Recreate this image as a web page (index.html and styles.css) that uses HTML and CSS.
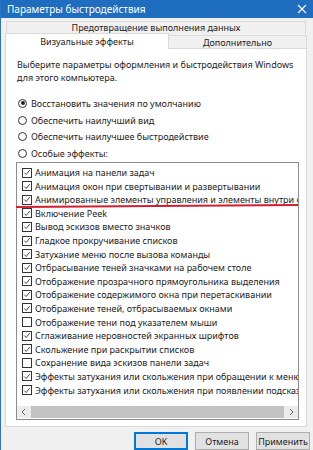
FILE: index.html
```html
<html lang="ru">
<head>
    <meta charset="UTF-8">
    <meta name="viewport" content="width=device-width, initial-scale=1.0">
    <title>Параметры быстродействия</title>
    <link rel="stylesheet" href="styles.css">
</head>
<body>
<div class="window">
    <div class="titlebar">
        <span class="title">Параметры быстродействия</span>
        <svg class="close" width="10" height="10" viewBox="0 0 10 10"><path d="M1 1 L9 9 M9 1 L1 9" stroke="#fff" stroke-width="1.1"/></svg>
    </div>

    <div class="content">
        <div class="tabs-top">
            <div class="tab tab-dep">Предотвращение выполнения данных</div>
        </div>
        <div class="tabs">
            <div class="tab tab-active">Визуальные эффекты</div>
            <div class="tab tab-more">Дополнительно</div>
        </div>

        <div class="panel">
            <p class="intro">Выберите параметры оформления и быстродействия Windows<br>для этого компьютера.</p>

            <div class="radios">
                <div class="radio-row"><span class="radio checked"></span>Восстановить значения по умолчанию</div>
                <div class="radio-row"><span class="radio"></span>Обеспечить наилучший вид</div>
                <div class="radio-row"><span class="radio"></span>Обеспечить наилучшее быстродействие</div>
                <div class="radio-row"><span class="radio"></span>Особые эффекты:</div>
            </div>

            <div class="listbox">
                <div class="items" id="items"></div>
                <div class="hscroll">
                    <svg class="arrow" width="14" height="12" viewBox="0 0 14 12"><path d="M8 3 L5 6 L8 9" fill="none" stroke="#606060" stroke-width="1"/></svg>
                    <div class="thumb"></div>
                    <svg class="arrow" width="14" height="12" viewBox="0 0 14 12"><path d="M6 3 L9 6 L6 9" fill="none" stroke="#606060" stroke-width="1"/></svg>
                </div>
                <div class="redline"></div>
            </div>
        </div>
    </div>

    <div class="buttons">
        <button class="btn btn-default">OK</button>
        <button class="btn">Отмена</button>
        <button class="btn">Применить</button>
    </div>
</div>

<script>
    const effects = [
        ["Анимация на панели задач", true],
        ["Анимация окон при свертывании и развертывании", true],
        ["Анимированные элементы управления и элементы внутри окна", true],
        ["Включение Peek", true],
        ["Вывод эскизов вместо значков", true],
        ["Гладкое прокручивание списков", true],
        ["Затухание меню после вызова команды", true],
        ["Отбрасывание теней значками на рабочем столе", true],
        ["Отображение прозрачного прямоугольника выделения", true],
        ["Отображение содержимого окна при перетаскивании", true],
        ["Отображение теней, отбрасываемых окнами", true],
        ["Отображение тени под указателем мыши", false],
        ["Сглаживание неровностей экранных шрифтов", true],
        ["Скольжение при раскрытии списков", true],
        ["Сохранение вида эскизов панели задач", false],
        ["Эффекты затухания или скольжения при обращении к меню", true],
        ["Эффекты затухания или скольжения при появлении подсказок", true]
    ];

    const tick = '<svg width="9" height="9" viewBox="0 0 9 9"><path d="M1.5 4.6 L3.6 6.8 L7.6 1.8" fill="none" stroke="#333" stroke-width="1"/></svg>';

    const list = document.getElementById("items");
    effects.forEach(function (e) {
        const row = document.createElement("div");
        row.className = "item";
        row.innerHTML = '<span class="check">' + (e[1] ? tick : '') + '</span><span class="label">' + e[0] + '</span>';
        list.appendChild(row);
    });
</script>
</body>
</html>
```

FILE: styles.css
```css
body {
    margin: 0;
    font-family: "Noto Sans", "Open Sans", sans-serif;
    font-size: 9px;
    color: #222;
}
.window {
    width: 313px;
    height: 450px;
    box-sizing: border-box;
    background-color: #f0f0f0;
    border-left: 1px solid #2f74c0;
    overflow: hidden;
}
.titlebar {
    height: 18px;
    background-color: #1f6dbf;
    color: #fff;
    display: flex;
    align-items: center;
    justify-content: space-between;
    padding: 0 6px 0 6px;
    font-size: 10px;
}
.content {
    padding: 3px 6px 0 4px;
}
.tabs-top {
    padding: 0 1px 0 1px;
    height: 12px;
}
.tab {
    box-sizing: border-box;
    background-color: #f0f0f0;
    border: 1px solid #d9d9d9;
    text-align: center;
    white-space: nowrap;
}
.tab-dep {
    height: 13px;
    line-height: 12px;
    border-bottom: none;
}
.tabs {
    display: flex;
    align-items: flex-end;
    height: 15px;
    position: relative;
    z-index: 1;
}
.tab-active {
    width: 164px;
    height: 16px;
    line-height: 15px;
    background-color: #fff;
    border-bottom: none;
    margin-bottom: -1px;
}
.tab-more {
    flex: 1;
    height: 13px;
    line-height: 13px;
    border-left: none;
    border-bottom: none;
}
.panel {
    height: 379px;
    box-sizing: border-box;
    background-color: #fff;
    border: 1px solid #d9d9d9;
    padding: 10px 8px 0 11px;
}
.intro {
    margin: 0;
    line-height: 12.5px;
    white-space: nowrap;
}
.radios {
    margin-top: 11px;
}
.radio-row {
    display: flex;
    align-items: center;
    height: 16.7px;
    margin-left: 1px;
}
.radio {
    width: 9px;
    height: 9px;
    box-sizing: border-box;
    border: 1px solid #333;
    border-radius: 50%;
    margin-right: 4px;
    position: relative;
}
.radio.checked::after {
    content: "";
    position: absolute;
    left: 1.5px;
    top: 1.5px;
    width: 4px;
    height: 4px;
    border-radius: 50%;
    background-color: #222;
}
.listbox {
    position: relative;
    margin-left: -1px;
    width: 283px;
    height: 258px;
    box-sizing: border-box;
    border: 1px solid #8c8c8c;
}
.items {
    height: 243px;
    box-sizing: border-box;
    padding: 3px 0 0 5px;
    overflow: hidden;
}
.item {
    display: flex;
    align-items: center;
    height: 13.6px;
    white-space: nowrap;
}
.check {
    flex: none;
    width: 10px;
    height: 10px;
    box-sizing: border-box;
    border: 1px solid #333;
    margin-right: 3px;
    display: flex;
    align-items: center;
    justify-content: center;
}
.hscroll {
    display: flex;
    align-items: center;
    height: 12px;
    background-color: #ebebeb;
}
.arrow {
    flex: none;
}
.thumb {
    flex: 1;
    height: 12px;
    background-color: #c2c2c2;
}
.redline {
    position: absolute;
    left: -1px;
    right: 0;
    top: 42px;
    height: 2px;
    background-color: #d21f30;
    transform: rotate(-0.45deg);
}
.buttons {
    display: flex;
    justify-content: flex-end;
    gap: 7px;
    padding: 5px 3px 0 0;
}
.btn {
    width: 54px;
    height: 18px;
    padding: 0;
    font-family: inherit;
    font-size: 9px;
    color: #222;
    background-color: #e1e1e1;
    border: 1px solid #adadad;
}
.btn-default {
    border-color: #0078d7;
    border-width: 2px;
}
```
